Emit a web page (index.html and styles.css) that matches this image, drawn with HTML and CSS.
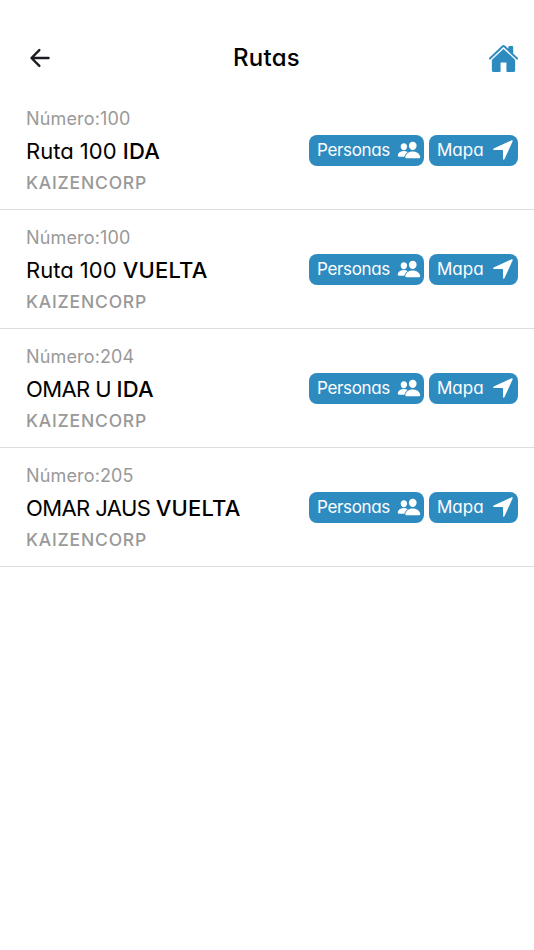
FILE: index.html
```html
<!DOCTYPE html>
<html lang="es">
<head>
    <meta charset="UTF-8">
    <meta name="viewport" content="width=device-width, initial-scale=1.0">
    <title>Rutas</title>
    <link rel="stylesheet" href="styles.css">
</head>
<body>

    <!-- Iconos -->
    <svg class="sprite" width="0" height="0">
        <symbol id="people" viewBox="0 0 512 512">
            <path d="M336 256c-20.56 0-40.44-9.18-56-25.84-15.13-16.25-24.37-37.92-26-61-1.74-24.62 5.77-47.26 21.14-63.76S312 80 336 80c23.83 0 45.38 9.06 60.7 25.52 15.47 16.62 23 39.22 21.26 63.63-1.67 23.11-10.9 44.77-26 61C376.44 246.82 356.57 256 336 256z"/>
            <path d="M467.83 432H204.18a27.71 27.71 0 01-22-10.67 30.22 30.22 0 01-5.26-25.79c8.42-33.81 29.28-61.85 60.32-81.08C264.79 297.4 299.86 288 336 288c36.85 0 71 9 98.71 26.05 31.11 19.13 52 47.33 60.38 81.55a30.27 30.27 0 01-5.32 25.78A27.68 27.68 0 01467.83 432z"/>
            <path d="M147 260c-35.19 0-66.13-32.72-69-72.93-1.42-20.6 5-39.65 18-53.62 12.86-13.83 31-21.45 51-21.45s38 7.66 50.93 21.57c13.1 14.08 19.5 33.09 18 53.52-2.87 40.2-33.8 72.91-68.93 72.91z"/>
            <path d="M212.66 291.45c-17.59-8.6-40.42-12.9-65.65-12.9-29.46 0-58.07 7.68-80.57 21.62-25.51 15.83-42.67 38.88-49.6 66.71a27.39 27.39 0 004.79 23.36A25.32 25.32 0 0041.72 400h111a8 8 0 007.87-6.57c.11-.63.25-1.26.41-1.88 8.48-34.06 28.35-62.84 57.71-83.82a8 8 0 00-.63-13.39c-1.57-.92-3.37-1.89-5.42-2.89z"/>
        </symbol>
        <symbol id="navigate" viewBox="0 0 512 512">
            <path d="M272 464a16 16 0 01-16-16.42V264.13a8 8 0 00-8-8H64.41a16.31 16.31 0 01-15.49-10.65 16 16 0 018.41-19.87l384-176.15a16 16 0 0121.22 21.19l-176 384A16 16 0 01272 464z"/>
        </symbol>
    </svg>

    <header class="header">
        <a href="#" class="back" aria-label="Volver">
            <svg viewBox="0 0 512 512">
                <path d="M244 400L100 256l144-144M120 256h292"/>
            </svg>
        </a>
        <h1 class="title">Rutas</h1>
        <a href="#" class="home" aria-label="Inicio">
            <svg viewBox="0 0 512 512">
                <path d="M261.56 101.28a8 8 0 00-11.06 0L66.4 277.15a8 8 0 00-2.47 5.79L63.9 448a32 32 0 0032 32H192a16 16 0 0016-16V328a8 8 0 018-8h80a8 8 0 018 8v136a16 16 0 0016 16h96.06a32 32 0 0032-32V282.94a8 8 0 00-2.47-5.79z"/>
                <path d="M490.91 244.15l-74.8-71.56V64a16 16 0 00-16-16h-48a16 16 0 00-16 16v32l-57.92-55.38C272.77 35.14 264.71 32 256 32c-8.68 0-16.72 3.14-22.14 8.63l-212.7 203.5c-6.22 6-7 15.87-1.34 22.37A16 16 0 0043 267.56L250.5 69.28a8 8 0 0111.06 0l207.52 198.28a16 16 0 0022.59-.44c6.14-6.36 5.63-16.86-.76-22.97z"/>
            </svg>
        </a>
    </header>

    <main class="rutas">
        <div class="ruta">
            <div class="info">
                <span class="numero">Número:100</span>
                <span class="nombre">Ruta 100 <b>IDA</b></span>
                <span class="empresa">KAIZENCORP</span>
            </div>
            <div class="acciones">
                <button class="btn btn-personas"><span>Personas</span><svg><use href="#people"/></svg></button>
                <button class="btn btn-mapa"><span>Mapa</span><svg><use href="#navigate"/></svg></button>
            </div>
        </div>

        <div class="ruta">
            <div class="info">
                <span class="numero">Número:100</span>
                <span class="nombre">Ruta 100 <b>VUELTA</b></span>
                <span class="empresa">KAIZENCORP</span>
            </div>
            <div class="acciones">
                <button class="btn btn-personas"><span>Personas</span><svg><use href="#people"/></svg></button>
                <button class="btn btn-mapa"><span>Mapa</span><svg><use href="#navigate"/></svg></button>
            </div>
        </div>

        <div class="ruta">
            <div class="info">
                <span class="numero">Número:204</span>
                <span class="nombre mayus">OMAR U <b>IDA</b></span>
                <span class="empresa">KAIZENCORP</span>
            </div>
            <div class="acciones">
                <button class="btn btn-personas"><span>Personas</span><svg><use href="#people"/></svg></button>
                <button class="btn btn-mapa"><span>Mapa</span><svg><use href="#navigate"/></svg></button>
            </div>
        </div>

        <div class="ruta">
            <div class="info">
                <span class="numero">Número:205</span>
                <span class="nombre mayus">OMAR JAUS <b>VUELTA</b></span>
                <span class="empresa">KAIZENCORP</span>
            </div>
            <div class="acciones">
                <button class="btn btn-personas"><span>Personas</span><svg><use href="#people"/></svg></button>
                <button class="btn btn-mapa"><span>Mapa</span><svg><use href="#navigate"/></svg></button>
            </div>
        </div>
    </main>

</body>
</html>
```
FILE: styles.css
```css
* {
    box-sizing: border-box;
}

body {
    margin: 0;
    min-height: 100vh;
    font-family: "Inter", sans-serif;
    font-feature-settings: "cv11";
    background-color: #ffffff;
    color: #000000;
}

.sprite {
    display: none;
}

.header {
    display: grid;
    grid-template-columns: 60px 1fr 60px;
    align-items: center;
    height: 91px;
    padding: 25px 15px 0 14px;
}

.header svg {
    display: block;
}

.back svg {
    width: 28px;
    height: 28px;
    margin-left: 11.5px;
    fill: none;
    stroke: #1c1c22;
    stroke-width: 44;
    stroke-linecap: round;
    stroke-linejoin: round;
}

.home svg {
    width: 31px;
    height: 31px;
    margin-left: auto;
    fill: #2e8bc0;
}

.title {
    margin: 0;
    padding-bottom: 1px;
    font-size: 24px;
    font-weight: 500;
    letter-spacing: 0.3px;
    text-align: center;
}

.ruta {
    display: flex;
    justify-content: space-between;
    align-items: center;
    height: 119px;
    padding: 0 16px 0 26px;
    border-bottom: 1px solid #dedede;
}

.info {
    display: flex;
    flex-direction: column;
    padding-bottom: 1px;
    white-space: nowrap;
}

.numero {
    font-size: 18px;
    font-weight: 400;
    letter-spacing: 0.15px;
    line-height: 33px;
    color: #999999;
}

.nombre {
    font-size: 22px;
    line-height: 33px;
}

.nombre.mayus {
    letter-spacing: -0.6px;
}

.nombre b {
    font-weight: 550;
    letter-spacing: 0.2px;
}

.empresa {
    font-size: 17.5px;
    font-weight: 550;
    letter-spacing: 0.8px;
    line-height: 29px;
    color: #999999;
}

.acciones {
    display: flex;
    gap: 5px;
}

.btn {
    display: flex;
    justify-content: space-between;
    align-items: center;
    height: 31px;
    padding: 0 3px 0 8px;
    border: none;
    border-radius: 8px;
    background-color: #2e8bc0;
    color: #ffffff;
    font-family: inherit;
    font-feature-settings: inherit;
    font-size: 17px;
    cursor: pointer;
}

.btn svg {
    width: 24px;
    height: 24px;
    fill: #ffffff;
}

.btn-personas {
    width: 115px;
    letter-spacing: -0.35px;
}

.btn-mapa {
    width: 89px;
}
```
